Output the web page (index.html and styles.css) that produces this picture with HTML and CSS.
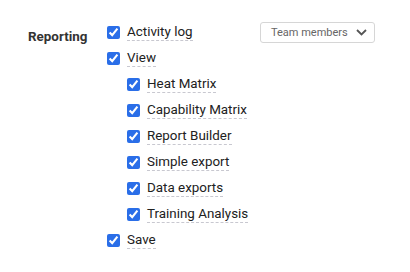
FILE: index.html
```html
<!DOCTYPE html>
<html lang="en">
<head>
  <meta charset="UTF-8" />
  <title>Permissions - Reporting</title>
  <link rel="stylesheet" href="styles.css">
</head>
<body>
  <div class="perm-group">
    <div class="perm-title">Reporting</div>
    <div class="perm-list">
      <div class="opt first">
        <label class="opt-label"><input type="checkbox" checked><span>Activity log</span></label>
        <div class="scope-select">
          <span>Team members</span>
          <svg width="11" height="7" viewBox="0 0 11 7"><path d="M1 1l4.5 4.5L10 1" fill="none" stroke="#555" stroke-width="1.8"/></svg>
        </div>
      </div>
      <div class="opt">
        <label class="opt-label"><input type="checkbox" checked><span>View</span></label>
      </div>
      <div class="opt sub">
        <label class="opt-label"><input type="checkbox" checked><span>Heat Matrix</span></label>
      </div>
      <div class="opt sub">
        <label class="opt-label"><input type="checkbox" checked><span>Capability Matrix</span></label>
      </div>
      <div class="opt sub">
        <label class="opt-label"><input type="checkbox" checked><span>Report Builder</span></label>
      </div>
      <div class="opt sub">
        <label class="opt-label"><input type="checkbox" checked><span>Simple export</span></label>
      </div>
      <div class="opt sub">
        <label class="opt-label"><input type="checkbox" checked><span>Data exports</span></label>
      </div>
      <div class="opt sub">
        <label class="opt-label"><input type="checkbox" checked><span>Training Analysis</span></label>
      </div>
      <div class="opt">
        <label class="opt-label"><input type="checkbox" checked><span>Save</span></label>
      </div>
    </div>
  </div>
</body>
</html>
```
FILE: styles.css
```css
html, body {
  margin: 0;
  padding: 0;
  background: #fff;
}

body {
  font-family: Roboto, "Liberation Sans", sans-serif;
  color: #212121;
}

.perm-group {
  display: flex;
  padding: 19px 0 0 28px;
}

.perm-title {
  width: 79px;
  font-size: 13.4px;
  font-weight: 700;
  color: #333;
  padding-top: 10px;
}

.perm-list {
  width: 268px;
}

.opt {
  display: flex;
  align-items: center;
  height: 26px;
}

.opt.first {
  justify-content: space-between;
}

.opt.sub {
  padding-left: 20px;
}

.opt-label {
  display: flex;
  align-items: center;
  gap: 7px;
  font-size: 13.4px;
}

.opt-label input {
  margin: 0;
  width: 13px;
  height: 13px;
  accent-color: #2a6ee8;
}

.opt-label span {
  border-bottom: 1px dashed #c8c8d0;
  line-height: 17px;
}

.scope-select {
  box-sizing: border-box;
  width: 115px;
  height: 21px;
  border: 1px solid #d6d6d6;
  border-radius: 3px;
  display: flex;
  align-items: center;
  justify-content: space-between;
  padding: 0 7px 0 10px;
  font-size: 11px;
  color: #666;
}
```
